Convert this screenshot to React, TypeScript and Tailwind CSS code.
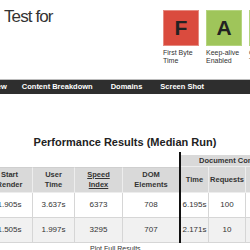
import React from "react";

const font = { fontFamily: '"Liberation Sans", Arial, sans-serif' };

function Grade({ letter, color, l1, l2 }: { letter: string; color: string; l1: string; l2: string }) {
  return (
    <div className="flex-none w-[36px] flex flex-col">
      <div
        className={`w-[36px] h-[36px] flex items-center justify-center text-[21px] font-bold text-[#222] border ${color}`}
      >
        {letter}
      </div>
      <div className="mt-[3px] text-[7px] leading-[8px] text-[#333] whitespace-nowrap">
        <div>{l1}</div>
        <div>{l2}</div>
      </div>
    </div>
  );
}

export default function App() {
  const hdr = "bg-[#d9d9d9] border-r border-b border-[#ededed] flex items-center justify-center text-center font-bold text-[7.5px] leading-[10px] text-[#333]";
  const d1 = "bg-white border-r border-b border-[#d6d6d6] flex items-center justify-center text-[8px] text-[#333]";
  const d2 = "bg-[#f1f1f1] border-r border-b border-[#d6d6d6] flex items-center justify-center text-[8px] text-[#333]";
  return (
    <div className="w-[250px] h-[250px] overflow-hidden bg-white" style={font}>
      <div className="h-[79px] flex">
        <div className="w-[163px] flex-none pl-[4px] pt-[7px] text-[17px] leading-[20px] tracking-[-0.9px] text-[#333]">
          Test for
        </div>
        <div className="flex gap-[7px] pt-[10px]">
          <Grade letter="F" color="bg-[#da4b3e] border-[#e58a80]" l1="First Byte" l2="Time" />
          <Grade letter="A" color="bg-[#9fc55a] border-[#b5d47f]" l1="Keep-alive" l2="Enabled" />
          <Grade letter="A" color="bg-[#9fc55a] border-[#b5d47f]" l1="Compress" l2="Transfer" />
        </div>
      </div>
      <div className="h-[15px] border-t border-[#bcbcbc] bg-[#2e2e2e] flex items-center gap-[18px] text-white font-bold text-[7.5px] whitespace-nowrap">
        <span className="ml-[-67px] mr-[-3px]">Performance Review</span>
        <span>Content Breakdown</span>
        <span>Domains</span>
        <span>Screen Shot</span>
      </div>
      <div className="mt-[42px] text-center text-[11px] leading-[13px] font-bold text-[#222]">
        Performance Results (Median Run)
      </div>
      <div className="mt-[3px] ml-[-13px] grid grid-cols-[46px_42px_48px_56px_2px_28px_37px_44px] grid-rows-[3px_12px_26px_25px_25px] w-max">
        <div className="col-start-5 row-start-1 row-span-5 bg-[#111]" />
        <div className="col-start-6 col-span-3 row-start-2 bg-[#d9d9d9] border-b border-[#ededed] flex items-center justify-center font-bold text-[7.5px] text-[#333] whitespace-nowrap">
          Document Complete
        </div>

        <div className={`${hdr} col-start-1 row-start-3 border-t border-t-[#cfcfcf]`}>Start<br />Render</div>
        <div className={`${hdr} col-start-2 row-start-3 border-t border-t-[#cfcfcf]`}>User<br />Time</div>
        <div className={`${hdr} col-start-3 row-start-3 border-t border-t-[#cfcfcf]`}>
          <span className="underline">Speed<br />Index</span>
        </div>
        <div className={`${hdr} col-start-4 row-start-3 border-t border-t-[#cfcfcf] border-r-0`}>DOM<br />Elements</div>
        <div className={`${hdr} col-start-6 row-start-3`}>Time</div>
        <div className={`${hdr} col-start-7 row-start-3`}>Requests</div>
        <div className={`${hdr} col-start-8 row-start-3`}>Bytes In</div>

        <div className={`${d1} col-start-1 row-start-4`}>1.905s</div>
        <div className={`${d1} col-start-2 row-start-4`}>3.637s</div>
        <div className={`${d1} col-start-3 row-start-4`}>6373</div>
        <div className={`${d1} col-start-4 row-start-4 border-r-0`}>708</div>
        <div className={`${d1} col-start-6 row-start-4`}>6.195s</div>
        <div className={`${d1} col-start-7 row-start-4`}>100</div>
        <div className={`${d1} col-start-8 row-start-4`}>2,873 KB</div>

        <div className={`${d2} col-start-1 row-start-5`}>1.505s</div>
        <div className={`${d2} col-start-2 row-start-5`}>1.997s</div>
        <div className={`${d2} col-start-3 row-start-5`}>3295</div>
        <div className={`${d2} col-start-4 row-start-5 border-r-0`}>707</div>
        <div className={`${d2} col-start-6 row-start-5`}>2.171s</div>
        <div className={`${d2} col-start-7 row-start-5`}>10</div>
        <div className={`${d2} col-start-8 row-start-5`}>1,042 KB</div>
      </div>
      <div className="mt-[2px] pl-[90px] text-[7px] leading-[8px] text-[#333] whitespace-nowrap">
        Plot Full Results
      </div>
    </div>
  );
}
